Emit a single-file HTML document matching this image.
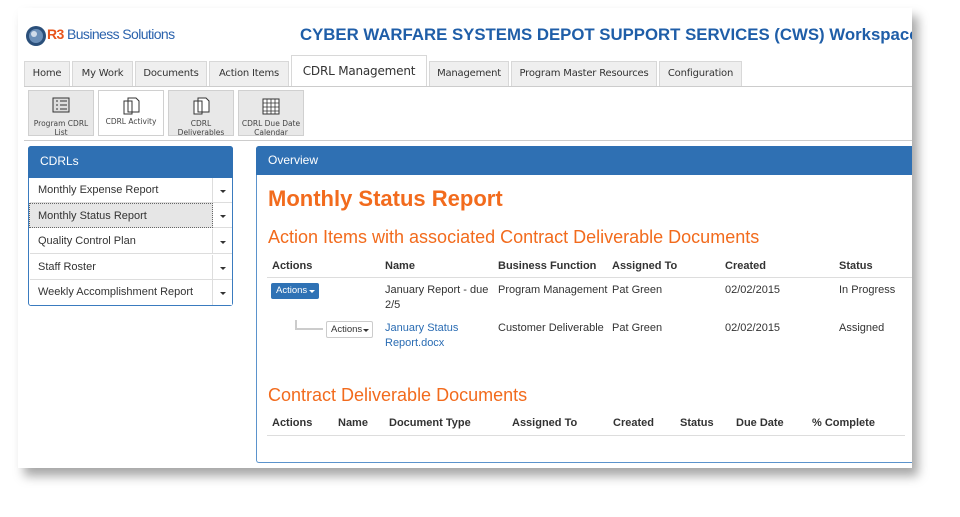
<!DOCTYPE html>
<html><head><style>
*{margin:0;padding:0;box-sizing:border-box}
body{width:960px;height:517px;background:#fff;position:relative;overflow:hidden;font-family:"Liberation Sans",sans-serif;}
.abs{position:absolute}
.frame{left:18px;top:8px;width:894px;height:460px;background:#fff;box-shadow:6px 8px 10px rgba(0,0,0,.35)}
.tab{position:absolute;top:61px;height:25px;background:#efefef;border:1px solid #d8d8d8;border-bottom:none;font-family:"DejaVu Sans",sans-serif;font-size:10px;color:#333;text-align:center;line-height:24px;white-space:nowrap;letter-spacing:-0.2px}
.sub{position:absolute;top:90px;height:46px;background:#e8e8e8;border:1px solid #d0d0d0;font-family:"DejaVu Sans",sans-serif;font-size:7.5px;color:#444;text-align:center;line-height:9px;padding-top:28px}
.sub svg{position:absolute;left:50%;top:6px;margin-left:-9px}
.item{position:absolute;left:30px;width:202px;height:25px;border-bottom:1px solid #ddd;font-size:11px;color:#333;line-height:25px;padding-left:8px;background:#fff}
.item .dd{position:absolute;right:0;top:0;width:20px;height:25px;border-left:1px solid #ddd}
.caret{position:absolute;width:0;height:0;border-left:3px solid transparent;border-right:3px solid transparent;border-top:3px solid #333}
.th{position:absolute;font-size:11px;font-weight:bold;color:#333}
.td{position:absolute;font-size:11px;color:#333;line-height:15px}
</style></head><body>
<div class="abs frame"></div>
<!-- logo -->
<svg class="abs" style="left:25px;top:25px" width="22" height="22"><circle cx="11" cy="11" r="10" fill="#2a4f7a"/><circle cx="11" cy="11" r="7" fill="#6b8fb8"/><circle cx="9" cy="9" r="3" fill="#d0dcea"/></svg>
<div class="abs" style="left:47px;top:26px;font-size:14px;letter-spacing:-0.6px;color:#2b63ad"><b style="color:#e8541c">R3</b> Business Solutions</div>
<div class="abs" style="left:300px;top:25px;font-size:16.8px;font-weight:bold;color:#1f5ea8;white-space:nowrap;width:612px;overflow:hidden">CYBER WARFARE SYSTEMS DEPOT SUPPORT SERVICES (CWS) Workspace</div>
<!-- tabs -->
<div class="tab" style="left:24px;width:46px">Home</div>
<div class="tab" style="left:72px;width:61px">My Work</div>
<div class="tab" style="left:135px;width:72px">Documents</div>
<div class="tab" style="left:209px;width:80px">Action Items</div>
<div class="tab" style="left:291px;top:55px;height:32px;width:136px;background:#fff;font-size:12px;line-height:30px">CDRL Management</div>
<div class="tab" style="left:429px;width:80px">Management</div>
<div class="tab" style="left:511px;width:146px">Program Master Resources</div>
<div class="tab" style="left:659px;width:83px">Configuration</div>
<div class="abs" style="left:24px;top:86px;width:888px;height:1px;background:#ccc"></div>
<!-- subnav -->
<div class="sub" style="left:28px;width:66px"><svg width="18" height="16"><rect x="1" y="1" width="16" height="14" fill="#ddd" stroke="#333"/><path d="M4 4h2M8 4h7M4 8h2M8 8h7M4 12h2M8 12h7" stroke="#333"/></svg>Program CDRL<br>List</div>
<div class="sub" style="left:98px;width:66px;background:#fff;padding-top:26px"><svg width="18" height="18"><path d="M6 1h8l3 3v11h-11z M2 4h8v13h-8z" fill="#fff" stroke="#333"/></svg>CDRL Activity</div>
<div class="sub" style="left:168px;width:66px"><svg width="18" height="18"><path d="M6 1h8l3 3v11h-11z M2 4h8v13h-8z" fill="#fff" stroke="#333"/></svg>CDRL<br>Deliverables</div>
<div class="sub" style="left:238px;width:66px"><svg width="18" height="18"><rect x="1" y="2" width="16" height="15" fill="#fff" stroke="#333"/><path d="M1 6h16M1 10h16M1 14h16M5 2v15M9 2v15M13 2v15" stroke="#333" stroke-width=".8"/></svg>CDRL Due Date<br>Calendar</div>
<div class="abs" style="left:24px;top:140px;width:888px;height:1px;background:#ccc"></div>
<!-- left panel -->
<div class="abs" style="left:28px;top:146px;width:205px;height:160px;border:1px solid #3a7bbf;border-radius:3px;background:#fff"></div>
<div class="abs" style="left:28px;top:146px;width:205px;height:32px;background:#2f70b3;border-radius:3px 3px 0 0;color:#fff;font-size:12px;line-height:30px;padding-left:12px">CDRLs</div>
<div class="item" style="top:178px">Monthly Expense Report<div class="dd"><i class="caret" style="left:7px;top:12px"></i></div></div>
<div class="item" style="top:203px;background:#e6e6e6;border:1px dotted #666;left:29px;width:184px">Monthly Status Report</div>
<div class="item" style="top:203px;left:213px;width:19px;padding:0"><i class="caret" style="left:7px;top:12px"></i></div>
<div class="item" style="top:229px">Quality Control Plan<div class="dd"><i class="caret" style="left:7px;top:12px"></i></div></div>
<div class="item" style="top:255px">Staff Roster<div class="dd"><i class="caret" style="left:7px;top:12px"></i></div></div>
<div class="item" style="top:280px;border-bottom:none">Weekly Accomplishment Report<div class="dd"><i class="caret" style="left:7px;top:12px"></i></div></div>
<!-- right panel -->
<div class="abs" style="left:256px;top:146px;width:656px;height:317px;border:1px solid #5b93cc;border-right:none;border-radius:3px 0 0 3px"></div>
<div class="abs" style="left:256px;top:146px;width:656px;height:29px;background:#2f70b3;border-radius:3px 0 0 0;color:#fff;font-size:12px;line-height:29px;padding-left:12px">Overview</div>
<div class="abs" style="left:268px;top:186px;font-size:22px;font-weight:bold;color:#f26b1d">Monthly Status Report</div>
<div class="abs" style="left:268px;top:227px;font-size:18px;color:#f26b1d">Action Items with associated Contract Deliverable Documents</div>
<div class="th" style="left:272px;top:260px">Actions</div>
<div class="th" style="left:385px;top:260px">Name</div>
<div class="th" style="left:498px;top:260px">Business Function</div>
<div class="th" style="left:612px;top:260px">Assigned To</div>
<div class="th" style="left:725px;top:260px">Created</div>
<div class="th" style="left:839px;top:260px">Status</div>
<div class="abs" style="left:267px;top:277px;width:645px;height:1px;background:#ddd"></div>
<div class="abs" style="left:271px;top:283px;width:48px;height:16px;background:#2f72b5;border-radius:2px;color:#fff;font-size:9.5px;line-height:16px;padding-left:5px">Actions<i class="caret" style="left:38px;top:7px;border-top-color:#fff"></i></div>
<div class="td" style="left:385px;top:283px">January Report - due<br>2/5</div>
<div class="td" style="left:498px;top:283px">Program Management</div>
<div class="td" style="left:612px;top:283px">Pat Green</div>
<div class="td" style="left:725px;top:283px">02/02/2015</div>
<div class="td" style="left:839px;top:283px">In Progress</div>
<div class="abs" style="left:295px;top:320px;width:28px;height:10px;border-left:2px solid #ccc;border-bottom:2px solid #ccc"></div>
<div class="abs" style="left:326px;top:321px;width:47px;height:17px;border:1px solid #ccc;border-radius:2px;font-size:9.5px;line-height:15px;padding-left:4px;color:#333">Actions<i class="caret" style="left:36px;top:7px"></i></div>
<div class="td" style="left:385px;top:321px;color:#2a6cb3">January Status<br>Report.docx</div>
<div class="td" style="left:498px;top:321px">Customer Deliverable</div>
<div class="td" style="left:612px;top:321px">Pat Green</div>
<div class="td" style="left:725px;top:321px">02/02/2015</div>
<div class="td" style="left:839px;top:321px">Assigned</div>
<div class="abs" style="left:268px;top:385px;font-size:18px;color:#f26b1d">Contract Deliverable Documents</div>
<div class="th" style="left:272px;top:417px">Actions</div>
<div class="th" style="left:338px;top:417px">Name</div>
<div class="th" style="left:389px;top:417px">Document Type</div>
<div class="th" style="left:512px;top:417px">Assigned To</div>
<div class="th" style="left:613px;top:417px">Created</div>
<div class="th" style="left:680px;top:417px">Status</div>
<div class="th" style="left:736px;top:417px">Due Date</div>
<div class="th" style="left:812px;top:417px">% Complete</div>
<div class="abs" style="left:267px;top:435px;width:638px;height:1px;background:#ddd"></div>
</body></html>
